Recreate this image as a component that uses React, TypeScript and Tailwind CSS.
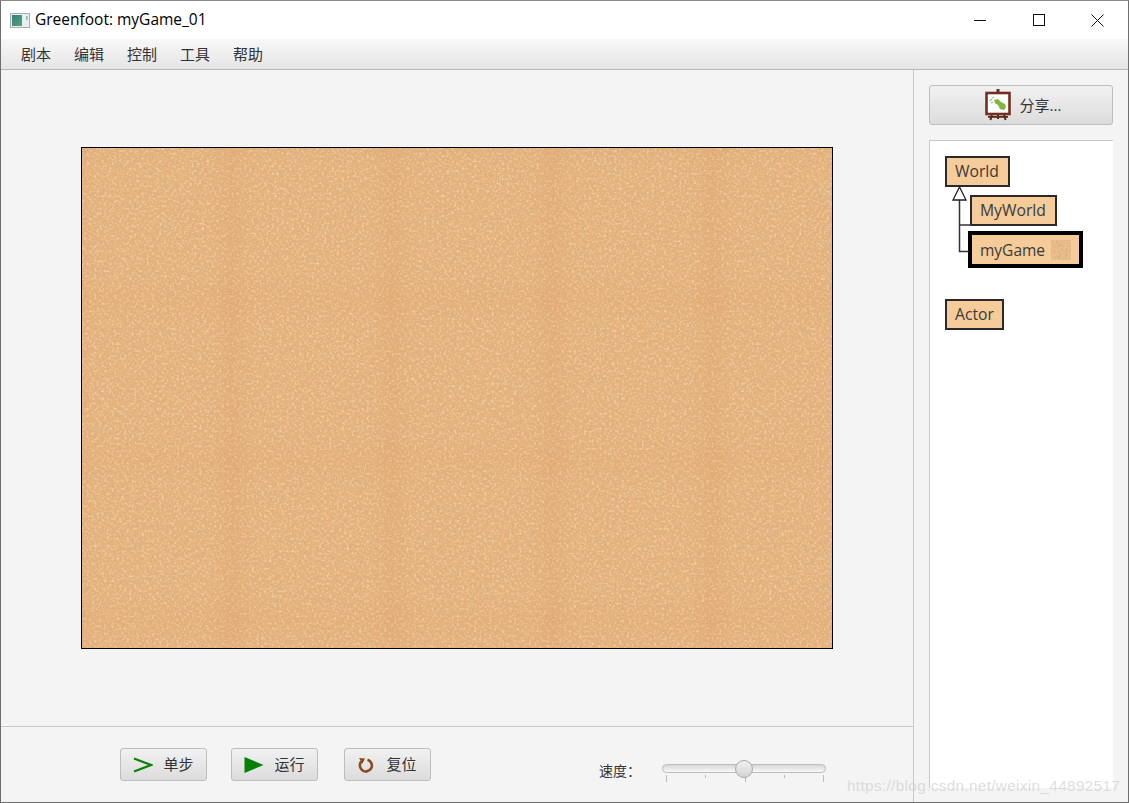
const sans = 'font-["Open_Sans","Noto_Sans_CJK_SC",sans-serif]';

function CorkWorld() {
  return (
    <svg width="750" height="500" className="block">
      <defs>
        <filter id="cork" x="0" y="0" width="100%" height="100%">
          <feTurbulence type="fractalNoise" baseFrequency="0.3" numOctaves="4" seed="7" />
          <feColorMatrix
            type="matrix"
            values="0 0 0 0 0.68  0 0 0 0 0.44  0 0 0 0 0.23  3.6 0 0 0 -1.6"
          />
        </filter>
        <filter id="cork-light" x="0" y="0" width="100%" height="100%">
          <feTurbulence type="fractalNoise" baseFrequency="0.4" numOctaves="3" seed="21" />
          <feColorMatrix
            type="matrix"
            values="0 0 0 0 0.97  0 0 0 0 0.80  0 0 0 0 0.58  3.4 0 0 0 -1.65"
          />
        </filter>
        <linearGradient id="band" x1="0" x2="1" y1="0" y2="0">
          <stop offset="0" stopColor="#d9935c" stopOpacity="0" />
          <stop offset="0.5" stopColor="#d9935c" stopOpacity="0.16" />
          <stop offset="1" stopColor="#d9935c" stopOpacity="0" />
        </linearGradient>
        <linearGradient id="band-h" x1="0" x2="0" y1="0" y2="1">
          <stop offset="0" stopColor="#d9935c" stopOpacity="0" />
          <stop offset="0.5" stopColor="#d9935c" stopOpacity="0.09" />
          <stop offset="1" stopColor="#d9935c" stopOpacity="0" />
        </linearGradient>
        <pattern id="tile" width="160" height="500" patternUnits="userSpaceOnUse" x="128">
          <rect width="44" height="500" fill="url(#band)" />
        </pattern>
        <pattern id="tile-h" width="750" height="160" patternUnits="userSpaceOnUse" y="130">
          <rect width="750" height="44" fill="url(#band-h)" />
        </pattern>
      </defs>
      <rect width="750" height="500" fill="#e5b27c" />
      <rect width="750" height="500" filter="url(#cork)" opacity="0.6" />
      <rect width="750" height="500" filter="url(#cork-light)" opacity="0.5" />
      <rect width="750" height="500" fill="url(#tile)" />
      <rect width="750" height="500" fill="url(#tile-h)" />
    </svg>
  );
}

function ToolButton({ label, icon, gap }: { label: string; icon: React.ReactNode; gap: string }) {
  return (
    <button
      className={`w-[87px] ${gap} h-[33px] flex items-center justify-center rounded-[3px] border border-[#bdbdbd] bg-gradient-to-b from-[#f1f1f1] to-[#dcdcdc] text-[15px] text-[#333]`}
    >
      {icon}
      <span>{label}</span>
    </button>
  );
}

function ClassBox({ label, className = '' }: { label: string; className?: string }) {
  return (
    <div className={`flex items-center border-2 border-[#2a2a2a] bg-[#f5cb99] text-[15.7px] text-[#3a3a3a] ${className}`}>
      {label}
    </div>
  );
}

function Easel() {
  return (
    <svg width="28" height="32" viewBox="0 0 28 32">
      <rect x="12.5" y="0" width="3" height="4" fill="#6b2c1c" />
      <path d="M8 25l-1.5 6M20 25l1.5 6M14 25v5" stroke="#5b2a1a" strokeWidth="2" />
      <rect x="4" y="27" width="20" height="1.8" fill="#5b2a1a" />
      <rect x="2.5" y="4" width="23" height="21" fill="#fff" stroke="#73301f" strokeWidth="2.6" />
      <path d="M10 11l4-1 3 3 4 2 1 3-2 3-4-1-2-4-3-2z" fill="#82b543" />
      <path d="M6 12l2-2M8 9l2-1M7 14l2-1" stroke="#9cc765" strokeWidth="1.3" />
    </svg>
  );
}

export default function App() {
  return (
    <div className={`${sans} w-[1129px] h-[803px] flex flex-col overflow-hidden border border-[#6e6e6e] border-t-[#8a8a8a] bg-[#f4f4f4] relative`}>
      {/* title bar */}
      <div className="h-[38px] shrink-0 bg-white flex items-center">
        <svg width="20" height="15" viewBox="0 0 20 15" className="ml-[9px] mr-[5px]">
          <rect x="0.5" y="0.5" width="19" height="14" fill="#e9eef0" stroke="#a9adb0" />
          <defs>
            <linearGradient id="ico" x1="0" x2="1" y1="0" y2="1">
              <stop offset="0" stopColor="#2f7f8f" />
              <stop offset="1" stopColor="#5aa36a" />
            </linearGradient>
          </defs>
          <rect x="2" y="2" width="10" height="11" fill="url(#ico)" />
          <rect x="16" y="3" width="1.5" height="4" fill="#7fb6a8" />
        </svg>
        <span className="text-[15.5px] text-black">Greenfoot: myGame_01</span>
        <div className="ml-auto flex items-center">
          <svg width="12" height="12" viewBox="0 0 12 12" className="mr-[47px]">
            <path d="M0 6.5h12" stroke="#111" />
          </svg>
          <svg width="12" height="12" viewBox="0 0 12 12" className="mr-[46px]">
            <rect x="0.5" y="0.5" width="11" height="11" fill="none" stroke="#111" />
          </svg>
          <svg width="13" height="13" viewBox="0 0 13 13" className="mr-[24px]">
            <path d="M0.5 0.5l12 12M12.5 0.5l-12 12" stroke="#111" />
          </svg>
        </div>
      </div>

      {/* menu bar */}
      <div className="h-[31px] shrink-0 flex items-center gap-[23px] pl-5 text-[15px] text-[#333] bg-gradient-to-b from-[#f8f8f8] to-[#e5e5e5] border-b border-[#b5b5b5]">
        <span>剧本</span>
        <span>编辑</span>
        <span>控制</span>
        <span>工具</span>
        <span>帮助</span>
      </div>

      <div className="flex-1 flex min-h-0">
        {/* world + controls */}
        <div className="w-[912px] shrink-0 flex flex-col">
          <div className="flex-1 flex items-center justify-center">
            <div className="border border-black">
              <CorkWorld />
            </div>
          </div>
          <div className="h-[76px] shrink-0 border-t border-[#c8c8c8] flex items-start pt-[21px] pl-[119px]">
            <ToolButton
              label="单步"
              gap="gap-[10px]"
              icon={
                <svg width="20" height="16" viewBox="0 0 20 16">
                  <path d="M1 1.5l17 6.5-17 6.5" fill="none" stroke="#0a820a" strokeWidth="2.2" />
                </svg>
              }
            />
            <div className="w-6 shrink-0" />
            <ToolButton
              label="运行"
              gap="gap-[10px]"
              icon={
                <svg width="20" height="16" viewBox="0 0 20 16">
                  <path d="M0.5 0l19 8-19 8z" fill="#078007" />
                </svg>
              }
            />
            <div className="w-[26px] shrink-0" />
            <ToolButton
              label="复位"
              gap="gap-[12px]"
              icon={
                <svg width="16" height="16" viewBox="0 0 16 16">
                  <path d="M4.5 3.5a6 6 0 1 0 5-.8" fill="none" stroke="#8a4a20" strokeWidth="2.6" />
                  <path d="M1 1l6 .5-2.5 5z" fill="#8a4a20" />
                </svg>
              }
            />
            <span className="ml-[168px] mt-[13px] text-sm text-[#333]">速度：</span>
            {/* speed slider */}
            <div className="ml-[21px] mt-[16px] relative w-[164px] h-[20px]">
              <div className="h-[9px] rounded-full border border-[#bdbdbd] bg-gradient-to-b from-[#d8d8d8] to-[#f8f8f8]" />
              <div className="absolute left-[73px] top-[-4px] w-[18px] h-[18px] rounded-full border border-[#a8a8a8] bg-gradient-to-b from-[#f0f0f0] to-[#d4d4d4]" />
              <div className="mt-[2px] ml-[4px] mr-[2px] flex justify-between items-start">
                <div className="w-px h-[7px] bg-[#bbb]" />
                <div className="w-px h-[3px] bg-[#bbb]" />
                <div className="w-px h-[7px] bg-[#bbb]" />
                <div className="w-px h-[3px] bg-[#bbb]" />
                <div className="w-px h-[7px] bg-[#bbb]" />
              </div>
            </div>
          </div>
        </div>

        {/* right side */}
        <div className="flex-1 border-l border-[#c8c8c8] pl-[15px] pr-[15px] pt-[15px] pb-[14px] flex flex-col">
          <button className="h-10 shrink-0 flex items-center justify-center gap-[8px] pl-[3px] rounded-[3px] border border-[#bdbdbd] bg-gradient-to-b from-[#f1f1f1] to-[#dcdcdc] text-[15px] text-[#333]">
            <Easel />
            <span>分享...</span>
          </button>
          <div className="mt-[15px] flex-1 bg-white border-l border-t border-[#c8c8c8] pl-[15px] pt-[15px] relative">
            <ClassBox label="World" className="w-[65px] h-[31px] pl-[8px]" />
            <ClassBox label="MyWorld" className="ml-[25px] mt-2 w-[87px] h-[31px] pl-[8px]" />
            <div className="ml-[23px] mt-[5px] w-[115px] h-[37px] border-[4px] border-black">
              <div className="h-full flex items-center bg-[#f5cb99] pl-[8px] pt-[2px] text-[15.5px] text-[#3a3a3a]">
                myGame
                <svg width="20" height="20" className="ml-[6px] -mt-[2px]">
                  <defs>
                    <filter id="thumb" x="0" y="0" width="100%" height="100%">
                      <feTurbulence type="fractalNoise" baseFrequency="0.55" numOctaves="3" seed="3" />
                      <feColorMatrix type="matrix" values="0 0 0 0 0.68  0 0 0 0 0.44  0 0 0 0 0.22  4 0 0 0 -1.7" />
                    </filter>
                  </defs>
                  <rect width="20" height="20" fill="#ecbf8c" />
                  <rect width="20" height="20" filter="url(#thumb)" opacity="0.8" />
                </svg>
              </div>
            </div>
            <ClassBox label="Actor" className="w-[59px] h-[31px] pl-[8px] mt-[31px]" />
            {/* inheritance arrows */}
            <svg width="30" height="80" className="absolute left-[20px] top-[45px]">
              <path d="M9.5 12V65.5H19M9.5 39H21" fill="none" stroke="#333" strokeWidth="1.5" />
              <path d="M9.5 1L3 14h13z" fill="#fff" stroke="#222" strokeWidth="1.3" />
            </svg>
          </div>
        </div>
      </div>

      {/* csdn watermark */}
      <span className="absolute left-[846px] top-[774px] font-['Liberation_Sans',sans-serif] text-[15.3px] tracking-[0.35px] text-[#cfcfcf]/70">
        https://blog.csdn.net/weixin_44892517
      </span>
    </div>
  );
}
